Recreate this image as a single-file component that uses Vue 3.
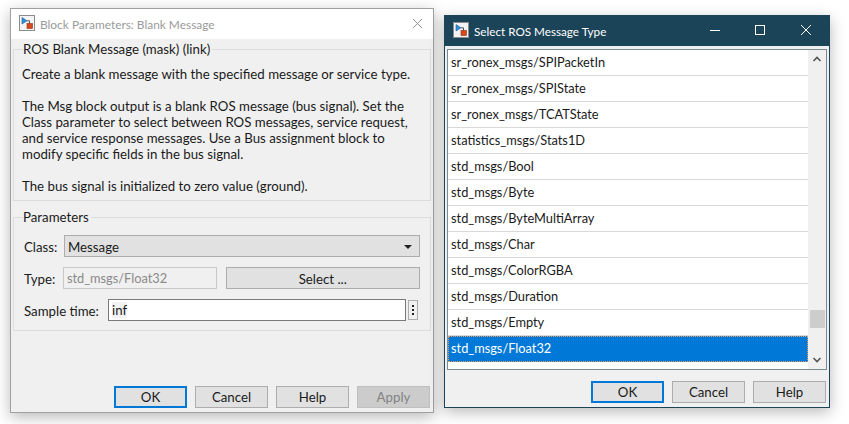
<script setup>
const messageTypes = [
  'sr_ronex_msgs/SPIPacketIn',
  'sr_ronex_msgs/SPIState',
  'sr_ronex_msgs/TCATState',
  'statistics_msgs/Stats1D',
  'std_msgs/Bool',
  'std_msgs/Byte',
  'std_msgs/ByteMultiArray',
  'std_msgs/Char',
  'std_msgs/ColorRGBA',
  'std_msgs/Duration',
  'std_msgs/Empty',
  'std_msgs/Float32'
]
const selected = 'std_msgs/Float32'
</script>

<template>
  <div class="desktop">
    <section class="window params">
      <header class="titlebar">
        <svg class="app-icon" viewBox="0 0 16 16">
          <rect x="0.5" y="0.5" width="15" height="15" fill="#f4f4f4" stroke="#8c8c8c" />
          <path d="M3 2.5 L3 9 L8 5.8 Z" fill="#2f8fd8" stroke="#1d5f9e" stroke-width="0.6" />
          <path d="M8 5.8 H10.5 V9" fill="none" stroke="#555" />
          <rect x="8" y="8.5" width="5.5" height="5" fill="#d9481c" stroke="#8e2f10" stroke-width="0.6" />
        </svg>
        <span class="title">Block Parameters: Blank Message</span>
        <svg class="close-x" viewBox="0 0 12 12">
          <path d="M1 1 L11 11 M11 1 L1 11" stroke="#8a8a8a" stroke-width="1" fill="none" />
        </svg>
      </header>

      <fieldset class="group about">
        <legend>ROS Blank Message (mask) (link)</legend>
        <p>Create a blank message with the specified message or service type.</p>
        <p>The Msg block output is a blank ROS message (bus signal). Set the<br>Class parameter to select between ROS messages, service request,<br>and service response messages. Use a Bus assignment block to<br>modify specific fields in the bus signal.</p>
        <p>The bus signal is initialized to zero value (ground).</p>
      </fieldset>

      <fieldset class="group form">
        <legend>Parameters</legend>
        <div class="row">
          <label class="lbl-class">Class:</label>
          <div class="combo">
            <span>Message</span>
            <i class="caret"></i>
          </div>
        </div>
        <div class="row">
          <label class="lbl-type">Type:</label>
          <div class="readonly">std_msgs/Float32</div>
          <button class="btn select">Select ...</button>
        </div>
        <div class="row">
          <label class="lbl-time">Sample time:</label>
          <div class="input"><span class="inf">inf</span></div>
          <button class="dots"><i></i><i></i><i></i></button>
        </div>
      </fieldset>

      <footer class="actions">
        <button class="btn primary">OK</button>
        <button class="btn">Cancel</button>
        <button class="btn">Help</button>
        <button class="btn disabled">Apply</button>
      </footer>
    </section>

    <section class="window picker">
      <header class="titlebar dark">
        <svg class="app-icon" viewBox="0 0 16 16">
          <rect x="0.5" y="0.5" width="15" height="15" fill="#f4f4f4" stroke="#8c8c8c" />
          <path d="M3 2.5 L3 9 L8 5.8 Z" fill="#2f8fd8" stroke="#1d5f9e" stroke-width="0.6" />
          <path d="M8 5.8 H10.5 V9" fill="none" stroke="#555" />
          <rect x="8" y="8.5" width="5.5" height="5" fill="#d9481c" stroke="#8e2f10" stroke-width="0.6" />
        </svg>
        <span class="title">Select ROS Message Type</span>
        <div class="win-controls">
          <svg viewBox="0 0 46 30"><path d="M19 14.5 H29" stroke="#fff" fill="none" /></svg>
          <svg viewBox="0 0 46 30"><rect x="18.5" y="9.5" width="9" height="9" stroke="#fff" fill="none" /></svg>
          <svg viewBox="0 0 46 30"><path d="M18 9 L28 19 M28 9 L18 19" stroke="#fff" fill="none" /></svg>
        </div>
      </header>

      <div class="list-box">
        <ul class="list">
          <li v-for="m in messageTypes" :key="m" :class="{ active: m === selected }">{{ m }}</li>
        </ul>
        <div class="scrollbar">
          <svg class="arrow" viewBox="0 0 10 8"><path d="M1.5 6 L5 2.5 L8.5 6" stroke="#555" stroke-width="1.6" fill="none" /></svg>
          <div class="thumb"></div>
          <svg class="arrow down" viewBox="0 0 10 8"><path d="M1.5 2 L5 5.5 L8.5 2" stroke="#555" stroke-width="1.6" fill="none" /></svg>
        </div>
      </div>

      <footer class="actions">
        <button class="btn primary">OK</button>
        <button class="btn">Cancel</button>
        <button class="btn">Help</button>
      </footer>
    </section>
  </div>
</template>

<style>
html, body {
  margin: 0;
  background: #fff;
}
</style>

<style scoped>
.desktop {
  position: relative;
  width: 849px;
  height: 424px;
  overflow: hidden;
  background: #fff;
  font-family: Lato, "Open Sans", sans-serif;
  font-size: 13.25px;
  color: #1a1a1a;
}

.window {
  position: absolute;
  box-sizing: border-box;
  display: flex;
  flex-direction: column;
  background: #f0f0f0;
  box-shadow: 0 4px 14px rgba(0, 0, 0, 0.28);
}

.params {
  left: 10px;
  top: 8px;
  width: 424px;
  height: 405px;
  border: 1px solid #a0a0a0;
  padding: 0 2px;
}

.picker {
  left: 444px;
  top: 15px;
  width: 386px;
  height: 393px;
  border: 1px solid #1c4459;
  padding: 0 2px;
}

.titlebar {
  display: flex;
  align-items: center;
  height: 30px;
  flex: none;
  margin: 0 -2px;
  padding-left: 8px;
  background: #fff;
}

.titlebar.dark {
  background: #1c4459;
  color: #fff;
}

.app-icon {
  width: 16px;
  height: 16px;
  margin-right: 5px;
  margin-bottom: 2px;
}

.title {
  color: #9a9a9a;
  font-size: 11.9px;
}

.dark .title {
  color: #fff;
  font-size: 11.7px;
}

.close-x {
  width: 11px;
  height: 11px;
  margin-left: auto;
  margin-right: 10px;
  margin-bottom: 1px;
}

.win-controls {
  display: flex;
  margin-left: auto;
}

.win-controls svg {
  width: 46px;
  height: 30px;
  display: block;
}

.group {
  margin: 0;
  min-width: 0;
  border: 1px solid #dcdcdc;
  padding: 0 9px;
}

.group legend {
  padding: 0 2px 0 0;
  line-height: 18px;
}

.about {
  margin-top: 1px;
  height: 161px;
  box-sizing: border-box;
  padding-left: 8px;
}

.about legend {
  margin-left: 1px;
}

.about p {
  margin: 0 0 16px;
  line-height: 16px;
  white-space: nowrap;
}

.about p:first-of-type {
  margin-top: 8px;
}

.form {
  margin-top: 7px;
  height: 123px;
  box-sizing: border-box;
  padding: 9px 10px;
}

.form legend {
  margin-left: -1px;
}

.row {
  display: flex;
  align-items: center;
  height: 22px;
  margin-bottom: 10px;
}

.row label {
  white-space: nowrap;
  padding-top: 1px;
}

.lbl-class { width: 40px; }
.lbl-type { width: 39px; }
.lbl-time { width: 84px; }

.combo {
  box-sizing: border-box;
  width: 356px;
  height: 22px;
  display: flex;
  align-items: center;
  justify-content: space-between;
  padding: 1px 7px 0 3px;
  background: #e1e1e1;
  border: 1px solid #adadad;
}

.caret {
  width: 0;
  height: 0;
  border-left: 4px solid transparent;
  border-right: 4px solid transparent;
  border-top: 4px solid #222;
}

.readonly {
  box-sizing: border-box;
  width: 154px;
  height: 22px;
  line-height: 21px;
  padding-left: 3px;
  margin-right: 9px;
  font-size: 12.8px;
  color: #8a8a8a;
  background: #f0f0f0;
  border: 1px solid #c8c8c8;
}

.input {
  box-sizing: border-box;
  width: 298px;
  height: 22px;
  line-height: 21px;
  padding-left: 3px;
  background: #fff;
  border: 1px solid #7a7a7a;
}

.inf {
  background: #f2f2f2;
}

.dots {
  box-sizing: border-box;
  width: 10px;
  height: 20px;
  margin-left: 2px;
  padding: 0;
  display: flex;
  flex-direction: column;
  align-items: center;
  justify-content: center;
  gap: 2px;
  background: #f0f0f0;
  border: 1px solid #adadad;
}

.dots i {
  width: 2px;
  height: 2px;
  background: #222;
}

.btn {
  box-sizing: border-box;
  width: 73px;
  height: 22px;
  padding: 0;
  font: inherit;
  color: #1a1a1a;
  background: #e1e1e1;
  border: 1px solid #adadad;
}

.btn.select {
  width: 195px;
  padding-top: 2px;
}

.btn.primary {
  border: 2px solid #0078d7;
}

.btn.disabled {
  color: #838383;
  background: #cccccc;
  border-color: #bfbfbf;
}

.actions {
  display: flex;
  justify-content: flex-end;
  gap: 8px;
  margin-top: auto;
  padding-bottom: 4px;
  padding-right: 1px;
}

.list-box {
  box-sizing: border-box;
  display: flex;
  height: 321px;
  margin-top: 3px;
  border: 1px solid #7a8a94;
  background: #fff;
}

.list {
  list-style: none;
  margin: 0;
  padding: 0;
  width: 360px;
  flex: none;
  font-size: 12.8px;
}

.list li {
  box-sizing: border-box;
  height: 26px;
  line-height: 25px;
  padding-left: 3px;
  border-bottom: 1px solid #d9d9d9;
  white-space: nowrap;
}

.list li.active {
  color: #fff;
  background: #0078d7;
  border-bottom: 0;
  outline: 1px dotted #e8a060;
  outline-offset: -1px;
}

.scrollbar {
  flex: 1;
  position: relative;
  display: flex;
  flex-direction: column;
  align-items: center;
  background: #f0f0f0;
}

.arrow {
  width: 10px;
  height: 8px;
  margin-top: 5px;
}

.arrow.down {
  margin-top: 0;
  position: absolute;
  bottom: 5px;
}

.thumb {
  position: absolute;
  top: 260px;
  left: 2px;
  right: 1px;
  height: 18px;
  background: #cdcdcd;
}
</style>
